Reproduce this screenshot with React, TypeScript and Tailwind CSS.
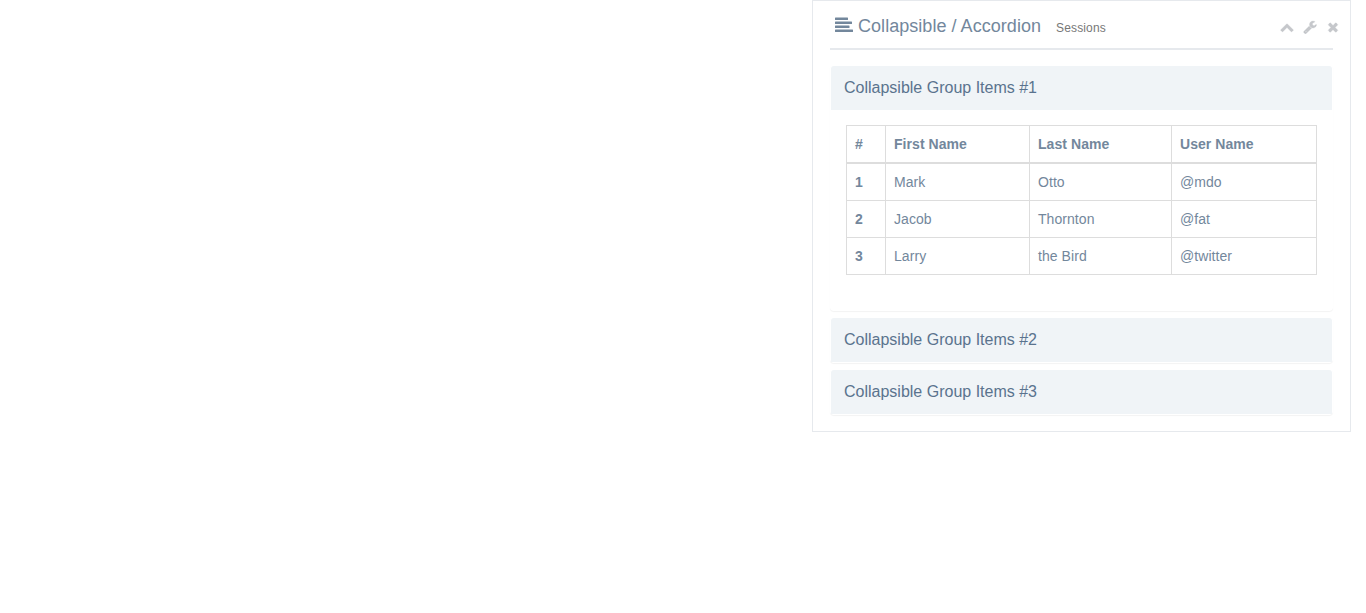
import { useState } from "react";

const CHEVRON_UP =
  "M1683 1331l-166 165q-19 19-45 19t-45-19l-531-531-531 531q-19 19-45 19t-45-19l-166-165q-19-19-19-45.5t19-45.5l742-741q19-19 45-19t45 19l742 741q19 19 19 45.5t-19 45.5z";
const WRENCH =
  "M448 1472q0-26-19-45t-45-19-45 19-19 45 19 45 45 19 45-19 19-45zm644-420l-682 682q-37 37-90 37-52 0-91-37l-106-108q-38-36-38-90 0-53 38-91l681-681q39 98 114.5 173.5t173.5 114.5zm634-435q0 39-23 106-47 134-164.5 217.5t-258.5 83.5q-185 0-316.5-131.5t-131.5-316.5 131.5-316.5 316.5-131.5q58 0 121.5 16.5t107.5 46.5q16 11 16 28t-16 28l-293 169v224l193 107q5-3 79-48.5t135.5-81 70.5-35.5q15 0 23.5 10t8.5 25z";
const CLOSE =
  "M1490 1322q0 40-28 68l-136 136q-28 28-68 28t-68-28l-294-294-294 294q-28 28-68 28t-68-28l-136-136q-28-28-28-68t28-68l294-294-294-294q-28-28-28-68t28-68l136-136q28-28 68-28t68 28l294 294 294-294q28-28 68-28t68 28l136 136q28 28 28 68t-28 68l-294 294 294 294q28 28 28 68z";

function Icon({ path, className }: { path: string; className: string }) {
  return (
    <svg
      viewBox="0 0 1792 1792"
      fill="currentColor"
      stroke="currentColor"
      strokeWidth="40"
      className={className}
      aria-hidden="true"
    >
      <path d={path} />
    </svg>
  );
}

function AlignLeftIcon() {
  return (
    <svg viewBox="0 0 18 15" fill="currentColor" className="mt-[6px] mr-[5px] h-[15px] w-[18px]" aria-hidden="true">
      <rect x="0" y="0.5" width="13" height="2.5" rx="0.5" />
      <rect x="0" y="4.5" width="17" height="2.5" rx="0.5" />
      <rect x="0" y="8.5" width="14.5" height="2.5" rx="0.5" />
      <rect x="0" y="12.4" width="18" height="2.6" rx="0.5" />
    </svg>
  );
}

const columns = ["#", "First Name", "Last Name", "User Name"];
const people = [
  ["Mark", "Otto", "@mdo"],
  ["Jacob", "Thornton", "@fat"],
  ["Larry", "the Bird", "@twitter"],
];

function PeopleTable() {
  return (
    <table className="w-[471px] table-fixed border-collapse border border-[#ddd] text-left tracking-[0.06px]">
      <colgroup>
        <col className="w-[39px]" />
        <col className="w-[144px]" />
        <col className="w-[142px]" />
        <col />
      </colgroup>
      <thead>
        <tr>
          {columns.map((name) => (
            <th key={name} className="border border-b-2 border-[#ddd] p-2 font-bold">
              {name}
            </th>
          ))}
        </tr>
      </thead>
      <tbody>
        {people.map((row, i) => (
          <tr key={row[0]}>
            <th className="border border-[#ddd] p-2 font-bold">{i + 1}</th>
            {row.map((cell) => (
              <td key={cell} className="border border-[#ddd] p-2">
                {cell}
              </td>
            ))}
          </tr>
        ))}
      </tbody>
    </table>
  );
}

export default function App() {
  const [open, setOpen] = useState(1);

  return (
    <div className="flex min-h-[613px] items-start justify-end bg-white pr-[15px] font-['Liberation_Sans',Arial,sans-serif] text-sm leading-5 text-[#73879C]">
      <section className="h-[432px] w-[539px] border border-[#E6E9ED] px-[17px] pt-[10px]">
        <header className="flex h-[39px] w-[503px] border-b-2 border-[#E6E9ED]">
          <h2 className="flex pl-[5px] text-lg leading-[30px] tracking-[0.04px]">
            <AlignLeftIcon />
            Collapsible / Accordion
            <small className="ml-[15px] pt-[2px] text-xs leading-[30px] tracking-[0.15px] text-[#777]">
              Sessions
            </small>
          </h2>
          <div className="-mr-[7px] ml-auto flex shrink-0 items-start pt-[9px] text-[#C5C7CB]">
            <button className="mr-[9px]" aria-label="Collapse">
              <Icon path={CHEVRON_UP} className="size-[14px]" />
            </button>
            <button className="mr-[9px]" aria-label="Settings">
              <Icon path={WRENCH} className="size-[14px]" />
            </button>
            <button aria-label="Close">
              <Icon path={CLOSE} className="size-[14px]" />
            </button>
          </div>
        </header>
        <div className="mt-[15px] flex w-[503px] flex-col gap-[6px]">
          {[1, 2, 3].map((n) => (
            <div
              key={n}
              className="rounded border border-transparent bg-white bg-clip-border shadow-[0_1px_1px_rgba(0,0,0,0.05)]"
            >
              <button
                onClick={() => setOpen(open === n ? 0 : n)}
                className="block h-11 w-full rounded-t-[3px] bg-[#F0F4F7] px-[13px] py-px text-left text-base leading-[42px] text-[#5A738E]"
              >
                Collapsible Group Items #{n}
              </button>
              {open === n && n === 1 && (
                <div className="h-[200px] p-[15px]">
                  <PeopleTable />
                </div>
              )}
            </div>
          ))}
        </div>
      </section>
    </div>
  );
}
